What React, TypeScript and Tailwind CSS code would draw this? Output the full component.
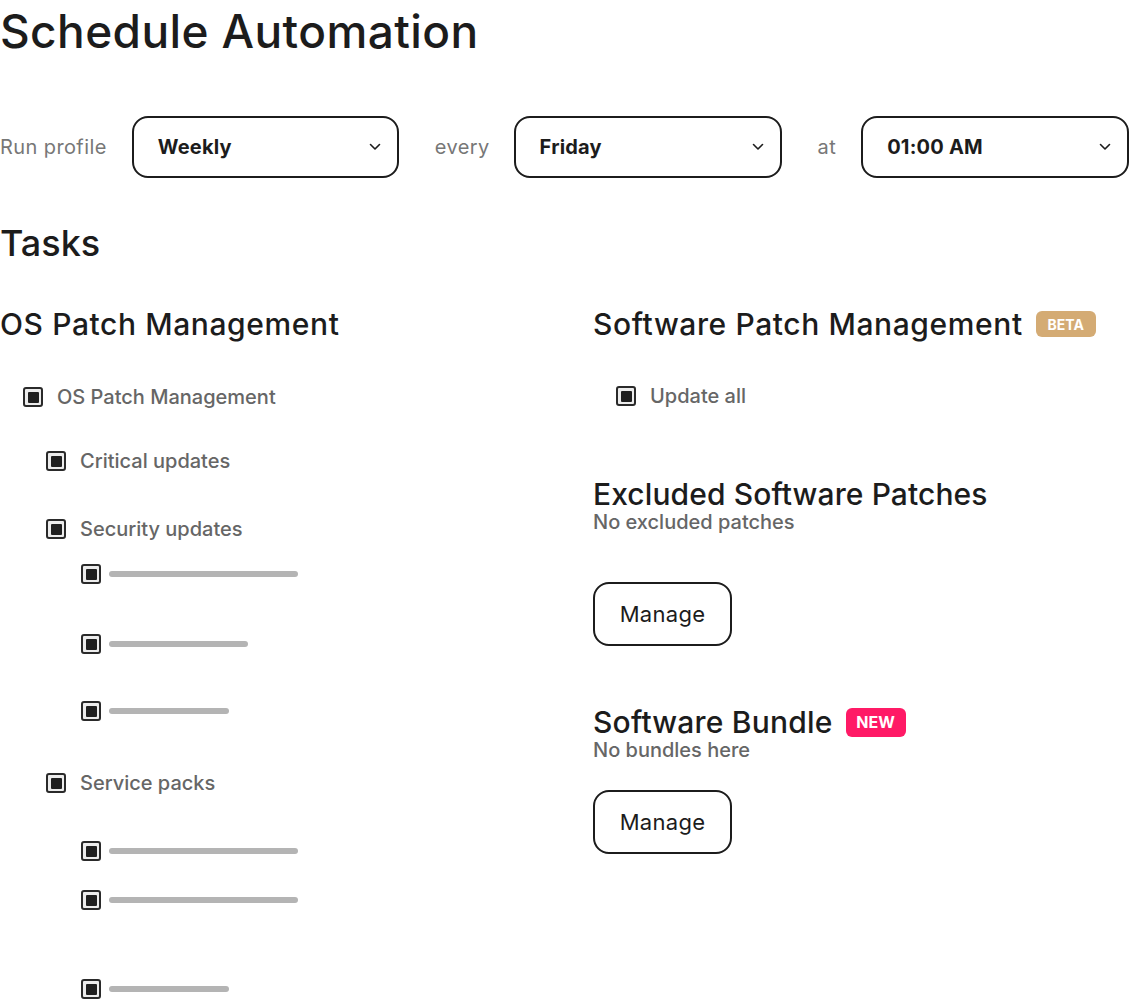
import React from "react";

const font = { fontFamily: "Inter, 'Noto Sans', sans-serif" };

function Chevron() {
  return (
    <svg width="12" height="8" viewBox="0 0 12 8" fill="none">
      <path d="M1.5 1.5L6 6L10.5 1.5" stroke="#1c1c1c" strokeWidth="1.6" strokeLinecap="round" strokeLinejoin="round" />
    </svg>
  );
}

function Select({ value, w }: { value: string; w: string }) {
  return (
    <div className={`${w} h-[62px] shrink-0 rounded-[16px] border-2 border-[#1c1c1c] flex items-center justify-between pl-6 pr-4`}>
      <span className="text-[20px] font-bold text-[#1c1c1c] tracking-[0.2px]">{value}</span>
      <Chevron />
    </div>
  );
}

function Check() {
  return (
    <div className="w-[20px] h-[20px] shrink-0 rounded-[3px] border-2 border-[#2a2a2a] bg-[#ececec] flex items-center justify-center">
      <div className="w-[11px] h-[11px] bg-[#1f1f1f] rounded-[1px]" />
    </div>
  );
}

type Row = { level: number; label?: string; bar?: number; mt: string };

const rows: Row[] = [
  { level: 0, label: "OS Patch Management", mt: "mt-[45px]" },
  { level: 1, label: "Critical updates", mt: "mt-[40px]" },
  { level: 1, label: "Security updates", mt: "mt-[44px]" },
  { level: 2, bar: 189, mt: "mt-[21px]" },
  { level: 2, bar: 139, mt: "mt-[46px]" },
  { level: 2, bar: 120, mt: "mt-[43px]" },
  { level: 1, label: "Service packs", mt: "mt-[48px]" },
  { level: 2, bar: 189, mt: "mt-[44px]" },
  { level: 2, bar: 189, mt: "mt-[25px]" },
  { level: 2, bar: 120, mt: "mt-[65px]" },
];

function ListRow({ r }: { r: Row }) {
  const indent = r.level === 0 ? "pl-[23px]" : r.level === 1 ? "pl-[46px]" : "pl-[81px]";
  return (
    <div className={`${r.mt} ${indent} h-[24px] flex items-center`}>
      <Check />
      {r.label ? (
        <span className="ml-[14px] text-[20px] font-medium tracking-[0px] text-[#666666] leading-[24px]">{r.label}</span>
      ) : (
        <div className="ml-[8px] h-[6px] rounded-full bg-[#b4b4b4]" style={{ width: r.bar }} />
      )}
    </div>
  );
}

function ManageButton({ mt }: { mt: string }) {
  return (
    <div className={`${mt} w-[139px] h-[64px] rounded-[16px] border-2 border-[#1c1c1c] flex items-center justify-center text-[22px] tracking-[0.3px] text-[#1c1c1c]`}>
      Manage
    </div>
  );
}

export default function App() {
  return (
    <div className="w-[1130px] h-[1008px] bg-white overflow-hidden text-[#1c1c1c]" style={font}>
      <h1 className="text-[46px] font-medium leading-[62px] tracking-[0.4px]">Schedule Automation</h1>

      <div className="mt-[54px] flex items-center">
        <span className="text-[20px] tracking-[0.4px] text-[#777777] mr-[25px]">Run profile</span>
        <Select value="Weekly" w="w-[267px]" />
        <span className="ml-[36px] mr-[24px] text-[20px] tracking-[0.4px] text-[#777777]">every</span>
        <Select value="Friday" w="w-[268px]" />
        <span className="ml-[36px] mr-[25px] text-[20px] tracking-[0.4px] text-[#777777]">at</span>
        <Select value="01:00 AM" w="w-[268px]" />
      </div>

      <h2 className="mt-[45px] text-[36px] font-medium leading-[40px]">Tasks</h2>

      <div className="mt-[45px] grid grid-cols-[537px_537px] gap-x-[56px]">
        <div className="flex flex-col">
          <h3 className="text-[30px] font-medium leading-[32px] tracking-[0.6px]">OS Patch Management</h3>
          {rows.map((r, i) => (
            <ListRow key={i} r={r} />
          ))}
        </div>

        <div className="flex flex-col items-start">
          <div className="flex items-center h-[32px]">
            <h3 className="text-[30px] font-medium leading-[32px] tracking-[0.6px] whitespace-nowrap">Software Patch Management</h3>
            <span className="ml-[13px] w-[60px] h-[26px] rounded-[6px] bg-[#d4ab74] text-white text-[14px] font-bold flex items-center justify-center">BETA</span>
          </div>
          <div className="mt-[44px] pl-[23px] h-[24px] flex items-center">
            <Check />
            <span className="ml-[14px] text-[20px] font-medium text-[#666666]">Update all</span>
          </div>

          <h3 className="mt-[70px] text-[30px] font-medium leading-[32px] tracking-[0.1px]">Excluded Software Patches</h3>
          <p className="text-[20px] font-medium text-[#666666] leading-[24px]">No excluded patches</p>
          <ManageButton mt="mt-[48px]" />

          <div className="mt-[60px] flex items-center h-[32px]">
            <h3 className="text-[30px] font-medium leading-[32px] tracking-[0.2px]">Software Bundle</h3>
            <span className="ml-[13px] w-[60px] h-[29px] rounded-[6px] bg-[#ff1a66] text-white text-[16px] font-bold flex items-center justify-center">NEW</span>
          </div>
          <p className="text-[20px] font-medium text-[#666666] leading-[24px]">No bundles here</p>
          <ManageButton mt="mt-[28px]" />
        </div>
      </div>
    </div>
  );
}
